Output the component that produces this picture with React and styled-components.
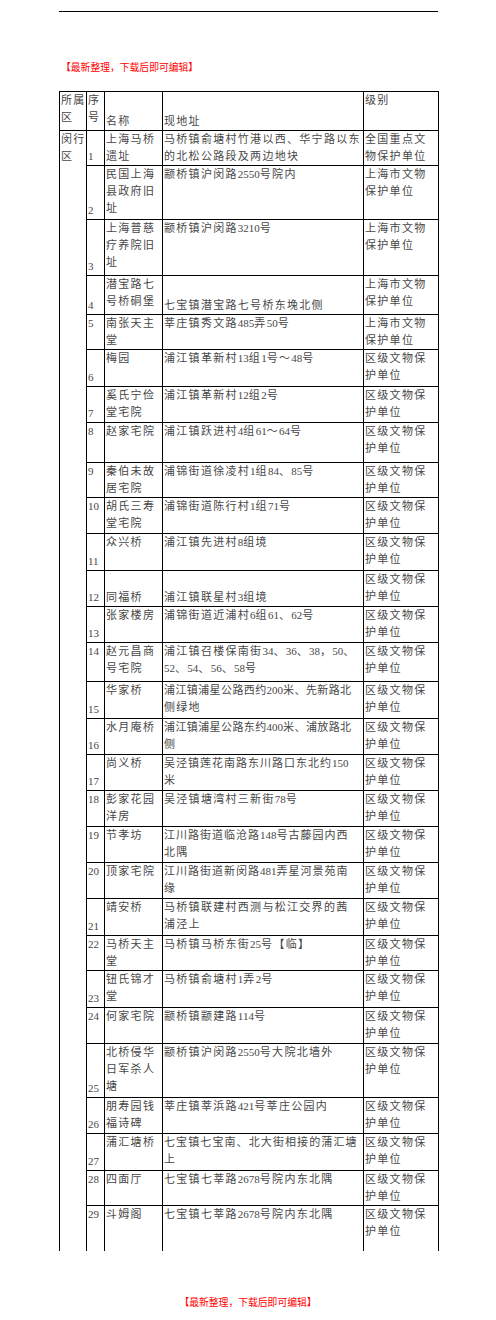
import React from "react";
import styled, { createGlobalStyle } from "styled-components";

const GlobalStyle = createGlobalStyle`
  html, body {
    margin: 0;
    padding: 0;
    background: #fff;
  }
  body {
    font-family: "Liberation Serif", "Noto Sans CJK SC", serif;
  }
`;

const L1 = ["全国重点文", "物保护单位"];
const L2 = ["上海市文物", "保护单位"];
const L3 = ["区级文物保", "护单位"];

// n: number, nv: number valign, name/addr/level: lines, nameV/addrV: valign, h: row height
// a line is a string, or [string, letter-spacing] where the original squeezes it
const rows = [
  { n: "1", nv: "bottom", name: ["上海马桥", "遗址"], addr: ["马桥镇俞塘村竹港以西、华宁路以东", "的北松公路段及两边地块"], level: L1, h: 35 },
  { n: "2", nv: "bottom", name: ["民国上海", "县政府旧", "址"], addr: ["颛桥镇沪闵路2550号院内"], level: L2, h: 54 },
  { n: "3", nv: "bottom", name: ["上海普慈", "疗养院旧", "址"], addr: ["颛桥镇沪闵路3210号"], level: L2, h: 56 },
  { n: "4", nv: "bottom", name: ["潜宝路七", "号桥硐堡"], addr: ["七宝镇潜宝路七号桥东堍北侧"], addrV: "bottom", level: L2, h: 39 },
  { n: "5", nv: "top", name: ["南张天主", "堂"], addr: ["莘庄镇秀文路485弄50号"], level: L2, h: 35 },
  { n: "6", nv: "bottom", name: ["梅园"], addr: ["浦江镇革新村13组1号〜48号"], level: L3, h: 37 },
  { n: "7", nv: "bottom", name: ["奚氏宁俭", "堂宅院"], addr: ["浦江镇革新村12组2号"], level: L3, h: 36 },
  { n: "8", nv: "top", name: ["赵家宅院"], addr: ["浦江镇跃进村4组61〜64号"], level: L3, h: 40 },
  { n: "9", nv: "top", name: ["秦伯未故", "居宅院"], addr: ["浦锦街道徐凌村1组84、85号"], level: L3, h: 35 },
  { n: "10", nv: "top", name: ["胡氏三寿", "堂宅院"], addr: ["浦锦街道陈行村1组71号"], level: L3, h: 36 },
  { n: "11", nv: "bottom", name: ["众兴桥"], addr: ["浦江镇先进村8组境"], level: L3, h: 37 },
  { n: "12", nv: "bottom", name: ["同福桥"], nameV: "bottom", addr: ["浦江镇联星村3组境"], addrV: "bottom", level: L3, h: 36 },
  { n: "13", nv: "bottom", name: ["张家楼房"], addr: ["浦锦街道近浦村6组61、62号"], level: L3, h: 36 },
  { n: "14", nv: "top", name: ["赵元昌商", "号宅院"], addr: ["浦江镇召楼保南街34、36、38，50、", "52、54、56、58号"], level: L3, h: 39 },
  { n: "15", nv: "bottom", name: ["华家桥"], addr: [["浦江镇浦星公路西约200米、先新路北", 0.4], "侧绿地"], level: L3, h: 37 },
  { n: "16", nv: "bottom", name: ["水月庵桥"], addr: [["浦江镇浦星公路东约400米、浦放路北", 0.4], "侧"], level: L3, h: 36 },
  { n: "17", nv: "bottom", name: ["尚义桥"], addr: [["吴泾镇莲花南路东川路口东北约150", 1], "米"], level: L3, h: 36 },
  { n: "18", nv: "top", name: ["彭家花园", "洋房"], addr: ["吴泾镇塘湾村三新街78号"], level: L3, h: 36 },
  { n: "19", nv: "top", name: ["节孝坊"], addr: [["江川路街道临沧路148号古藤园内西", 1], "北隅"], level: L3, h: 36 },
  { n: "20", nv: "top", name: ["顶家宅院"], addr: [["江川路街道新闵路481弄星河景苑南", 1], "缘"], level: L3, h: 36 },
  { n: "21", nv: "bottom", name: ["靖安桥"], addr: ["马桥镇联建村西测与松江交界的茜", "浦泾上"], level: L3, h: 37 },
  { n: "22", nv: "top", name: ["马桥天主", "堂"], addr: ["马桥镇马桥东街25号【临】"], level: L3, h: 35 },
  { n: "23", nv: "bottom", name: ["钮氏锦才", "堂"], addr: ["马桥镇俞塘村1弄2号"], level: L3, h: 37 },
  { n: "24", nv: "top", name: ["何家宅院"], addr: ["颛桥镇颛建路114号"], level: L3, h: 36 },
  { n: "25", nv: "bottom", name: ["北桥侵华", "日军杀人", "塘"], addr: ["颛桥镇沪闵路2550号大院北墙外"], level: L3, h: 54 },
  { n: "26", nv: "bottom", name: ["朋寿园钱", "福诗碑"], addr: ["莘庄镇莘浜路421号莘庄公园内"], level: L3, h: 36 },
  { n: "27", nv: "bottom", name: ["蒲汇塘桥"], addr: [["七宝镇七宝南、北大街相接的蒲汇塘", 1.1], "上"], level: L3, h: 37 },
  { n: "28", nv: "top", name: ["四面厅"], addr: ["七宝镇七莘路2678号院内东北隅"], level: L3, h: 35 },
  { n: "29", nv: "top", name: ["斗姆阁"], addr: ["七宝镇七莘路2678号院内东北隅"], level: L3, h: 45 },
];

const Page = styled.div`
  width: 496px;
  height: 1320px;
  padding-top: 11px;
  box-sizing: border-box;
`;

const TopRule = styled.div`
  margin-left: 59px;
  width: 379px;
  border-top: 1.5px solid #000;
`;

const Note = styled.div`
  font-family: "Noto Sans CJK SC", sans-serif;
  font-size: 9.8px;
  line-height: 12px;
  color: #ff0000;
  margin-left: ${(p) => (p.$center ? "0" : "61px")};
  text-align: ${(p) => (p.$center ? "center" : "left")};
  padding-top: ${(p) => p.$top}px;
`;

const Table = styled.table`
  margin-left: 59px;
  margin-top: 18px;
  width: 379px;
  border-collapse: collapse;
  table-layout: fixed;
  font-size: 11px;
  line-height: 17px;
  color: #474747;
  letter-spacing: 1.3px;
`;

const Col = styled.col`
  width: ${(p) => p.$w}px;
`;

const Row = styled.tr`
  height: ${(p) => p.$h}px;
`;

const Cell = styled.td`
  border: 1px solid #000;
  border-bottom: ${(p) => (p.$open ? "none" : "1px solid #000")};
  padding: 0 0 0 1px;
  vertical-align: ${(p) => p.$v || "top"};
  white-space: nowrap;
  overflow: hidden;
`;

const Line = styled.span`
  letter-spacing: ${(p) => (p.$ls == null ? "inherit" : `${p.$ls}px`)};
`;

const Digits = styled.span`
  letter-spacing: 0;
`;

// latin digits sit tight, CJK characters keep their wider pitch
const Text = ({ children }) =>
  children.split(/(\d+)/).map((part, i) =>
    /^\d+$/.test(part) ? <Digits key={i}>{part}</Digits> : part
  );

const Lines = ({ lines }) =>
  lines.map((l, i) => {
    const [t, ls] = Array.isArray(l) ? l : [l, null];
    return (
      <React.Fragment key={i}>
        {i > 0 && <br />}
        <Line $ls={ls}>
          <Text>{t}</Text>
        </Line>
      </React.Fragment>
    );
  });

export default function App() {
  const last = rows.length - 1;
  return (
    <Page>
      <GlobalStyle />
      <TopRule />
      <Note $top={49}>【最新整理，下载后即可编辑】</Note>
      <Table>
        <colgroup>
          <Col $w={27} />
          <Col $w={18} />
          <Col $w={58} />
          <Col $w={201} />
          <Col $w={75} />
        </colgroup>
        <tbody>
          <Row $h={39}>
            <Cell>
              所属
              <br />区
            </Cell>
            <Cell>
              序<br />号
            </Cell>
            <Cell $v="bottom">名称</Cell>
            <Cell $v="bottom">现地址</Cell>
            <Cell>级别</Cell>
          </Row>
          {rows.map((r, i) => (
            <Row key={r.n} $h={r.h}>
              {i === 0 && (
                <Cell rowSpan={rows.length} $open>
                  闵行
                  <br />区
                </Cell>
              )}
              <Cell $v={r.nv} $open={i === last}>
                <Digits>{r.n}</Digits>
              </Cell>
              <Cell $v={r.nameV} $open={i === last}>
                <Lines lines={r.name} />
              </Cell>
              <Cell $v={r.addrV} $open={i === last}>
                <Lines lines={r.addr} />
              </Cell>
              <Cell $open={i === last}>
                <Lines lines={r.level} />
              </Cell>
            </Row>
          ))}
        </tbody>
      </Table>
      <Note $center $top={45}>
        【最新整理，下载后即可编辑】
      </Note>
    </Page>
  );
}
